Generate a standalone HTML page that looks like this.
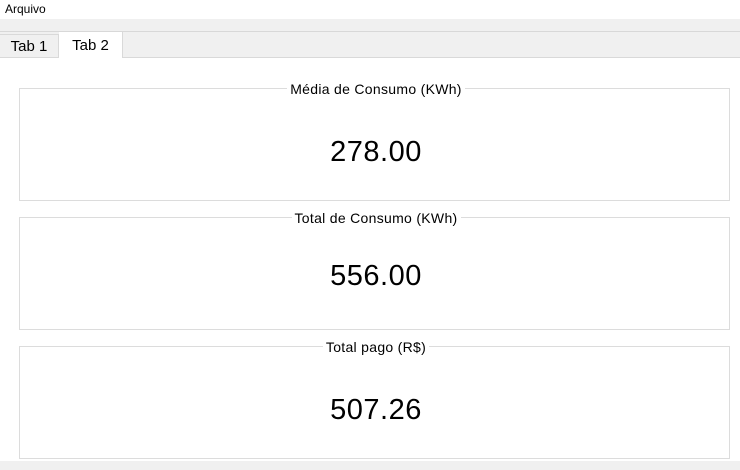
<html><head><style>
body{margin:0;width:740px;height:470px;background:#fff;font-family:"Liberation Sans","DejaVu Sans",sans-serif;position:relative;overflow:hidden}
.a{position:absolute}
.box{position:absolute;left:19px;width:709px;border:1px solid #dcdcdc;background:#fff}
.t{position:absolute;left:6px;width:740px;text-align:center;font-size:14px;color:#000;line-height:16px;letter-spacing:0.3px}
.t span{background:#fff;padding:0 3px}
.n{position:absolute;left:6px;width:740px;text-align:center;font-size:29px;line-height:32px;color:#000;letter-spacing:0.5px}
</style></head><body>
<div class="a" style="left:5px;top:2px;font-size:12px">Arquivo</div>
<div class="a" style="left:0;top:19px;width:740px;height:12px;background:#f0f0f0;border-bottom:1px solid #d8d8d8"></div>
<div class="a" style="left:0;top:32px;width:740px;height:25px;background:#f0f0f0;border-bottom:1px solid #d9d9d9"></div>
<div class="a" style="left:0;top:34px;width:58px;height:23px;border-top:1px solid #d9d9d9;border-right:1px solid #d9d9d9;font-size:15px;text-align:center;line-height:24px">Tab 1</div>
<div class="a" style="left:59px;top:32px;width:63px;height:26px;background:#fff;border-right:1px solid #d9d9d9;font-size:15px;text-align:center;line-height:27px">Tab 2</div>
<div class="box" style="top:88px;height:111px"></div>
<div class="box" style="top:217px;height:111px"></div>
<div class="box" style="top:346px;height:111px"></div>
<div class="t" style="top:81px"><span>Média de Consumo (KWh)</span></div>
<div class="t" style="top:210px"><span>Total de Consumo (KWh)</span></div>
<div class="t" style="top:339px"><span>Total pago (R$)</span></div>
<div class="n" style="top:136px">278.00</div>
<div class="n" style="top:260px">556.00</div>
<div class="n" style="top:394px">507.26</div>
<div class="a" style="left:0;top:461px;width:740px;height:9px;background:#f0f0f0"></div>
</body></html>
